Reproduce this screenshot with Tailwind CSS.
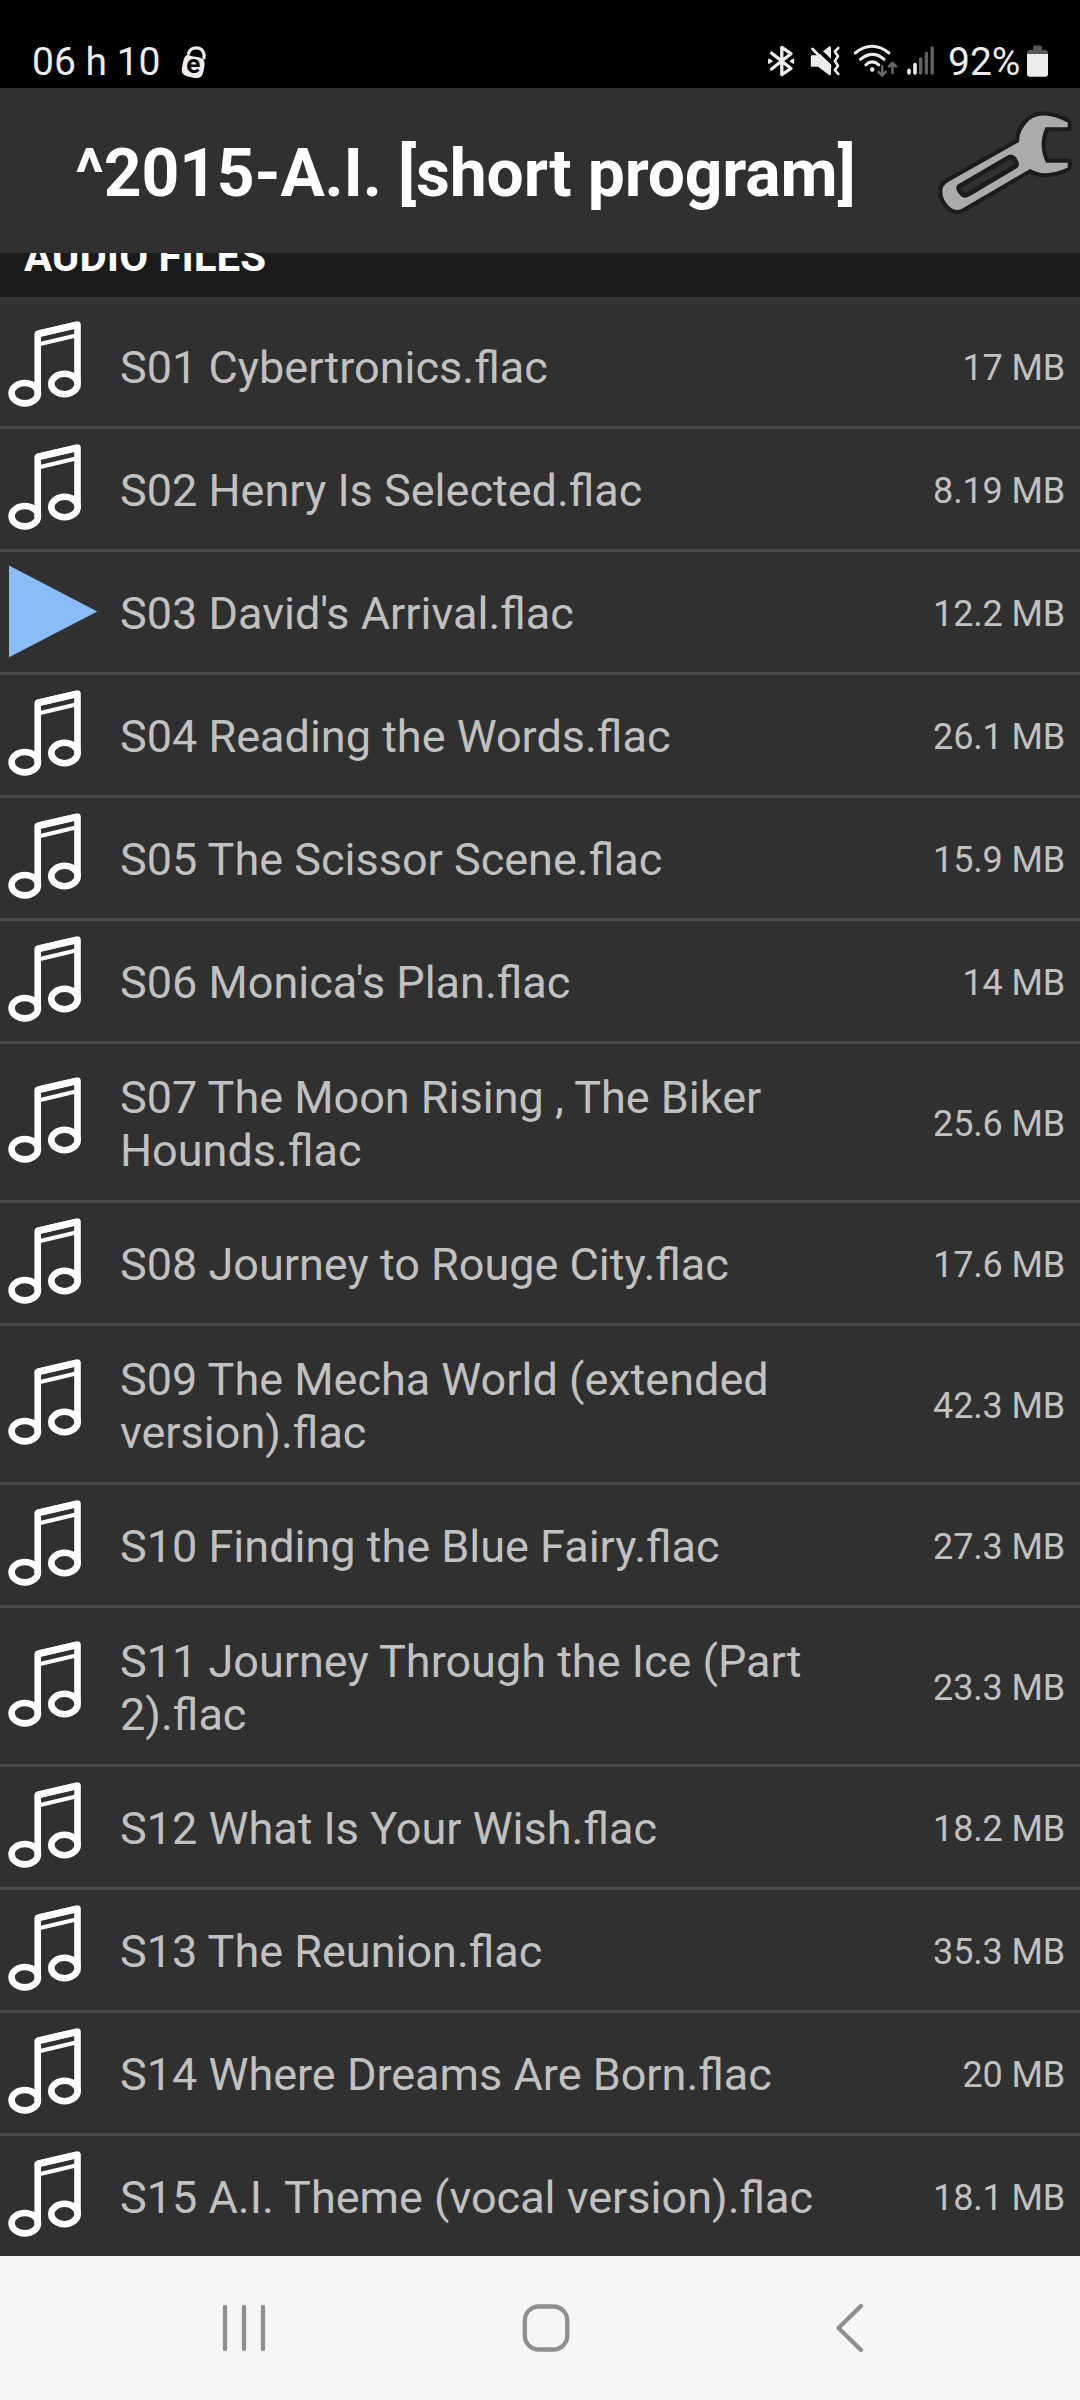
<!DOCTYPE html>
<html lang="en">
<head>
<meta charset="utf-8">
<title>Audio files</title>
<script src="https://cdn.jsdelivr.net/npm/@tailwindcss/browser@4"></script>
</head>
<body class="w-[1080px] h-[2400px] overflow-hidden bg-[#303030] font-[Roboto,sans-serif]">
<svg class="hidden">
  <symbol id="note" viewBox="0 0 120 120">
    <g fill="none" stroke="#fff" stroke-linejoin="round">
      <ellipse cx="24.800" cy="87.200" rx="13.200" ry="10.200" stroke-width="6.600"/>
      <ellipse cx="64.500" cy="78" rx="13.200" ry="10.200" stroke-width="6.600"/>
      <path d="M37.700 88V28L77.500 18.600V78" stroke-width="6.600"/>
      <path d="M38 27.800L77 18.800" stroke-width="7"/>
      <path d="M38 38.500L77 29.300" stroke-width="4"/>
    </g>
  </symbol>
  <symbol id="play" viewBox="0 0 120 120"><path d="M9 13.500V105.300L97.300 59.500Z" fill="#89bbf7"/></symbol>
</svg>

<header class="flex h-[88px] justify-between bg-black text-[#ececec]">
  <div class="flex pl-8">
    <span class="w-[145px] pt-[39px] text-[39px] leading-[46px] whitespace-nowrap">06 h 10</span>
    <svg class="h-[88px] w-[36px]" viewBox="177 0 36 88">
      <path d="M188.500 53.500C191 46 202 46 204 54V58" fill="none" stroke="#ececec" stroke-width="3.200" stroke-linecap="round"/>
      <path d="M189 55.300C193 57 198 56.500 202 58.500C206 60.500 204.500 68 203 73C201.500 79.500 195 78.500 188 76.500C181.500 74.500 181 72 182.500 65C184 58 185 54 189 55.300Z" fill="#ececec"/>
      <text x="193.200" y="73" text-anchor="middle" font-family="Roboto" font-weight="700" font-size="26" fill="#000">e</text>
    </svg>
  </div>
  <div class="flex">
    <svg class="h-[88px] w-[177px]" viewBox="765 0 177 88" fill="none" stroke="#ececec" stroke-linecap="round" stroke-linejoin="round">
      <path d="M771.500 53L791 68.500L781.800 74.700V47.300L791 53.700L771.500 69" stroke-width="3.300"/>
      <path d="M768.800 59.300L772 61.200L768.800 63.200ZM793.500 59.300L790.500 61.200L793.500 63.200Z" stroke-width="1.500" fill="#ececec"/>
      <path d="M812 56.500H818.500L829.800 47.500V74L818.500 65.500H812Z" fill="#ececec" stroke-width="2.400"/>
      <path d="M814.500 46L833 63.500" stroke="#000" stroke-width="4"/>
      <path d="M812.500 49L830 66.500" stroke-width="2.800"/>
      <path d="M838.300 48L834.800 51.500L838 56.300L834.800 61L838 65.700L834.800 70L838.300 74" stroke-width="2.600"/>
      <path d="M855.300 53Q872 39.500 889 53M860.500 59.300Q872.500 49.500 884 59.300M865.800 64.800Q872 59 878.800 64.800" stroke-width="3"/>
      <circle cx="872.200" cy="69.500" r="2.200" fill="#ececec" stroke="none"/>
      <path d="M882.200 66V75M878.700 72L882.200 75.600L885.700 72M892.500 73V63.500M889 66.500L892.500 63L896 66.500" stroke="#666" stroke-width="2.600"/>
      <path d="M909 70.300V73M915 64.500V73" stroke-width="3.600"/>
      <path d="M920.700 59V73M926.400 53.500V73M932.200 48V73" stroke="#606060" stroke-width="3.400"/>
    </svg>
    <span class="ml-[6px] w-[74px] pt-[39px] text-[39px] leading-[46px] whitespace-nowrap">92%</span>
    <svg class="ml-[1px] h-[88px] w-[57px]" viewBox="1023 0 57 88">
      <path d="M1033 50V47Q1033 45.500 1034.500 45.500H1040.500Q1042 45.500 1042 47V50H1045Q1048 50 1048 53V54H1027V53Q1027 50 1030 50Z" fill="#565656"/>
      <path d="M1027 54H1048V74Q1048 76.800 1045 76.800H1030Q1027 76.800 1027 74Z" fill="#ececec"/>
    </svg>
  </div>
</header>

<div class="flex h-[165px] justify-between bg-[#303030]">
  <h1 class="pt-[47px] pl-[75px] text-[66px] leading-[77px] font-bold tracking-[-0.16px] whitespace-nowrap text-white">^2015-A.I. [short program]</h1>
  <svg class="h-[165px] w-[150px]" viewBox="930 88 150 165" stroke="#1b1b1b" stroke-width="8" stroke-linejoin="round">
    <path d="M1067.700 122.500V127.300H1045.500Q1037.500 145 1046 162.700H1067.700V167.500Q1045 178 1030 169L961.500 209Q956.500 211.500 951 208Q941 200 942.500 189Q943 185 949 181.500L1019 142Q1019 130 1029 120.500Q1043 109.500 1067.700 122.500Z"/>
    <path d="M1067.700 122.500V127.300H1045.500Q1037.500 145 1046 162.700H1067.700V167.500Q1045 178 1030 169L961.500 209Q956.500 211.500 951 208Q941 200 942.500 189Q943 185 949 181.500L1019 142Q1019 130 1029 120.500Q1043 109.500 1067.700 122.500Z" fill="#ababab" stroke="none"/>
    <path d="M959 186.500L1009.500 157Q1012 156 1014.500 159Q1018 164 1016 166L968 194.500Q965 196.500 962.500 194.500Q957 189 959 186.500Z" fill="#303030" stroke-width="4.500"/>
  </svg>
</div>

<div class="flex h-[44px] items-end overflow-hidden bg-[#1a1a1a] pl-6">
  <h2 class="mb-[16px] text-[42px] leading-[49px] font-bold text-white">AUDIO FILES</h2>
</div>
<div class="h-[6px] bg-[#353535]"></div>
<div class="h-[3px]"></div>
<main id="list" class="flex flex-col text-[#c1c1c1]"></main>

<nav class="h-[144px] bg-[#f6f6f6]">
  <svg class="h-[144px] w-[1080px]" viewBox="0 2256 1080 144" fill="none" stroke="#8f8f8f" stroke-width="4.300" stroke-linecap="round" stroke-linejoin="round">
    <path d="M225 2307V2349M244 2307V2349M263 2307V2349"/>
    <rect x="524.800" y="2306.500" width="42.500" height="43" rx="14"/>
    <path d="M861 2306L838.500 2328L861 2350"/>
  </svg>
</nav>

<script>
const files = [
  ["S01 Cybertronics.flac", "17 MB"],
  ["S02 Henry Is Selected.flac", "8.19 MB"],
  ["S03 David's Arrival.flac", "12.2 MB", true],
  ["S04 Reading the Words.flac", "26.1 MB"],
  ["S05 The Scissor Scene.flac", "15.9 MB"],
  ["S06 Monica's Plan.flac", "14 MB"],
  ["S07 The Moon Rising , The Biker<br>Hounds.flac", "25.6 MB"],
  ["S08 Journey to Rouge City.flac", "17.6 MB"],
  ["S09 The Mecha World (extended<br>version).flac", "42.3 MB"],
  ["S10 Finding the Blue Fairy.flac", "27.3 MB"],
  ["S11 Journey Through the Ice (Part<br>2).flac", "23.3 MB"],
  ["S12 What Is Your Wish.flac", "18.2 MB"],
  ["S13 The Reunion.flac", "35.3 MB"],
  ["S14 Where Dreams Are Born.flac", "20 MB"],
  ["S15 A.I. Theme (vocal version).flac", "18.1 MB"]
];
document.getElementById("list").innerHTML = files.map(([name, size, playing], i) => {
  const height = name.includes("<br>") ? "h-[156px]" : "h-[120px]";
  const line = i < files.length - 1 ? '<div class="h-[3px] bg-[#4a4a4a]"></div>' : "";
  return `<div class="flex ${height} items-center pr-[15px]">
    <svg class="size-[120px] shrink-0"><use href="#${playing ? "play" : "note"}"/></svg>
    <span class="grow pt-[3px] text-[45px] leading-[53px] whitespace-nowrap">${name}</span>
    <span class="pt-[3px] text-[36px] leading-[42px] tracking-[-0.15px] whitespace-nowrap">${size}</span>
  </div>${line}`;
}).join("");
</script>
</body>
</html>
